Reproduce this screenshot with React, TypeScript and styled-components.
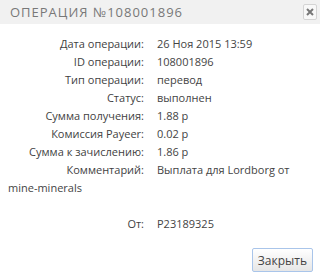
import React from 'react';
import styled, { createGlobalStyle } from 'styled-components';

const GlobalStyle = createGlobalStyle`
  html, body {
    margin: 0;
    padding: 0;
    background: #ffffff;
  }
`;

const Dialog = styled.div`
  width: 320px;
  height: 275px;
  background: #ffffff;
  font-family: 'Open Sans', 'Liberation Sans', sans-serif;
  color: #444444;
  display: flex;
  flex-direction: column;
`;

const Header = styled.div`
  height: 24px;
  background: #f1f1f1;
  display: flex;
  align-items: center;
  justify-content: space-between;
  padding: 0 3px 0 10px;
`;

const Title = styled.div`
  font-size: 13px;
  letter-spacing: 1px;
  color: #787878;
  text-transform: uppercase;
`;

const CloseButton = styled.button`
  width: 14px;
  height: 16px;
  padding: 0;
  border: 1px solid #d4d4d4;
  border-radius: 2px;
  background: #f8f8f8;
  display: flex;
  align-items: center;
  justify-content: center;
`;

const Body = styled.div`
  padding: 11px 8px 0 8px;
  font-size: 11px;
  line-height: 18px;
`;

const Row = styled.div<{ gapBefore?: boolean }>`
  margin-top: ${(p) => (p.gapBefore ? '18px' : '0')};
`;

const Label = styled.span`
  display: inline-block;
  vertical-align: top;
  width: 136px;
  margin-right: 13px;
  text-align: right;
  color: #3f3f3f;
`;

const Value = styled.span`
  color: #444444;
`;

const Footer = styled.div`
  display: flex;
  justify-content: flex-end;
  padding: 15px 7px 0 0;
`;

const Button = styled.button`
  height: 24px;
  padding: 0 5px;
  border: 1px solid #a9c5ea;
  border-radius: 2px;
  background: linear-gradient(#ffffff, #e6e6e6);
  font-family: 'Open Sans', 'Liberation Sans', sans-serif;
  font-size: 12px;
  color: #444444;
`;

const rows = [
  { label: 'Дата операции:', value: '26 Ноя 2015 13:59' },
  { label: 'ID операции:', value: '108001896' },
  { label: 'Тип операции:', value: 'перевод' },
  { label: 'Статус:', value: 'выполнен' },
  { label: 'Сумма получения:', value: '1.88 р' },
  { label: 'Комиссия Payeer:', value: '0.02 р' },
  { label: 'Сумма к зачислению:', value: '1.86 р' },
  { label: 'Комментарий:', value: 'Выплата для Lordborg от mine-minerals' },
];

const App = () => {
  return (
    <>
      <GlobalStyle />
      <Dialog>
        <Header>
          <Title>Операция №108001896</Title>
          <CloseButton>
            <svg width="8" height="8" viewBox="0 0 8 8">
              <path d="M1 1 L7 7 M7 1 L1 7" stroke="#777" strokeWidth="2" />
            </svg>
          </CloseButton>
        </Header>
        <Body>
          {rows.map((r) => (
            <Row key={r.label}>
              <Label>{r.label}</Label>
              <Value>{r.value}</Value>
            </Row>
          ))}
          <Row gapBefore>
            <Label>От:</Label>
            <Value>P23189325</Value>
          </Row>
        </Body>
        <Footer>
          <Button>Закрыть</Button>
        </Footer>
      </Dialog>
    </>
  );
};

export default App;
